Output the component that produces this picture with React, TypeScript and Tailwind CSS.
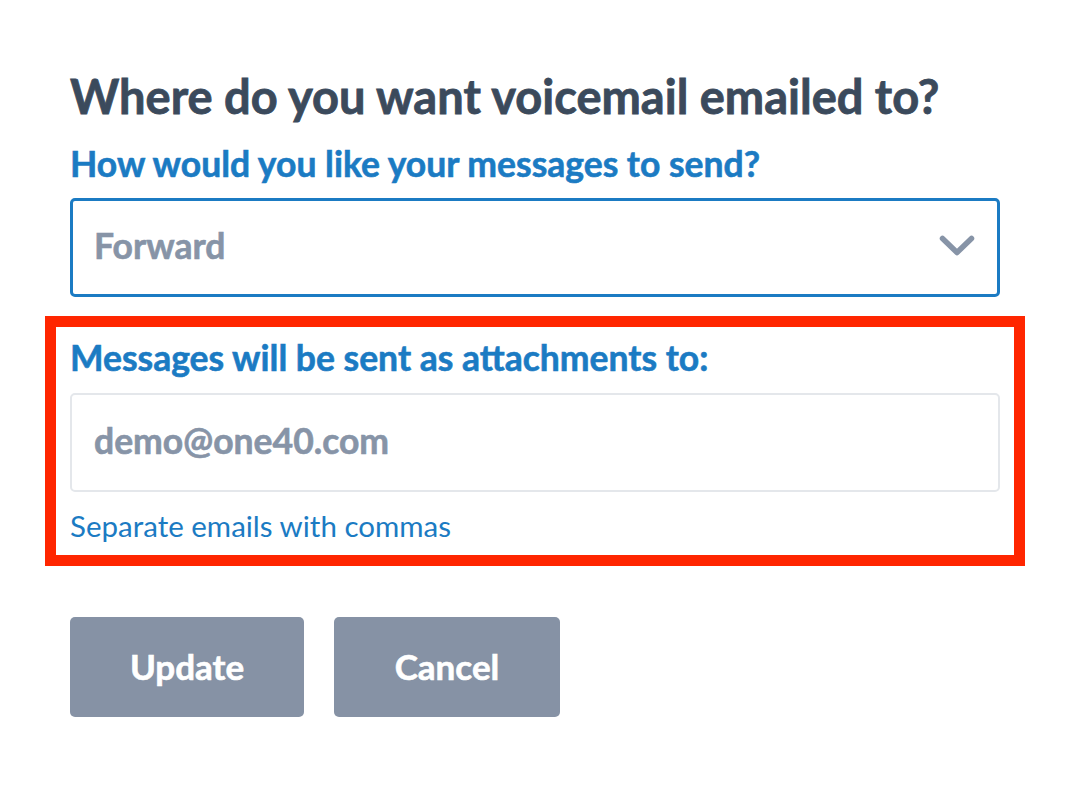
import { useState } from 'react';

const font = { fontFamily: 'Lato, "Noto Sans", sans-serif' };

function Chevron() {
  return (
    <svg width="36" height="22" viewBox="0 0 36 22" fill="none" aria-hidden>
      <path
        d="M3.5 3.5 L18 17.5 L32.5 3.5"
        stroke="#8794a7"
        strokeWidth="5.5"
        strokeLinecap="round"
        strokeLinejoin="round"
      />
    </svg>
  );
}

export default function App() {
  const [email, setEmail] = useState('');

  return (
    <div className="min-h-[794px] w-[1070px] bg-white pl-[70px] pt-[70px]" style={font}>
      <div className="w-[930px]">
        <h1 className="text-[47px] font-bold leading-[52px] text-[#3b4a5c] [-webkit-text-stroke:0.8px_#3b4a5c]">
          Where do you want voicemail emailed to?
        </h1>

        <label className="mt-[22px] block text-[35.5px] font-bold leading-[40px] text-[#1b7bc3] [-webkit-text-stroke:0.6px_#1b7bc3]">
          How would you like your messages to send?
        </label>

        <div className="mt-[14px] flex h-[99px] items-center justify-between rounded-[5px] border-[3px] border-[#1b7bc3] pb-[4px] pl-[21px] pr-[22px]">
          <span className="text-[35.5px] font-bold text-[#8794a7] [-webkit-text-stroke:0.6px_#8794a7]">Forward</span>
          <Chevron />
        </div>

        {/* highlighted block */}
        <section className="-ml-[25px] -mr-[25px] mt-[19px] border-[11px] border-[#ff2600] px-[14px] pb-[12px] pt-[11px]">
          <label className="block text-[35.5px] font-bold leading-[40px] text-[#1b7bc3] [-webkit-text-stroke:0.6px_#1b7bc3]">
            Messages will be sent as attachments to:
          </label>
          <input
            value={email}
            onChange={(e) => setEmail(e.target.value)}
            placeholder="demo@one40.com"
            className="mt-[15px] block h-[99px] w-full rounded-[5px] border-2 border-[#e4e7eb] px-[22px] pb-[4px] text-[35.5px] font-bold text-[#3b4a5c] outline-none [-webkit-text-stroke:0.6px_currentColor] placeholder:text-[#8794a7]"
          />
          <p className="mt-[17px] text-[29.5px] leading-[34px] text-[#1b7bc3]">Separate emails with commas</p>
        </section>

        <div className="mt-[51px] flex gap-[30px]">
          <button className="h-[100px] w-[234px] rounded-[5px] bg-[#8692a5] pb-[2px] text-[35px] font-bold text-white [-webkit-text-stroke:0.6px_#ffffff]">
            Update
          </button>
          <button className="h-[100px] w-[226px] rounded-[5px] bg-[#8692a5] pb-[2px] text-[35px] font-bold text-white [-webkit-text-stroke:0.6px_#ffffff]">
            Cancel
          </button>
        </div>
      </div>
    </div>
  );
}
